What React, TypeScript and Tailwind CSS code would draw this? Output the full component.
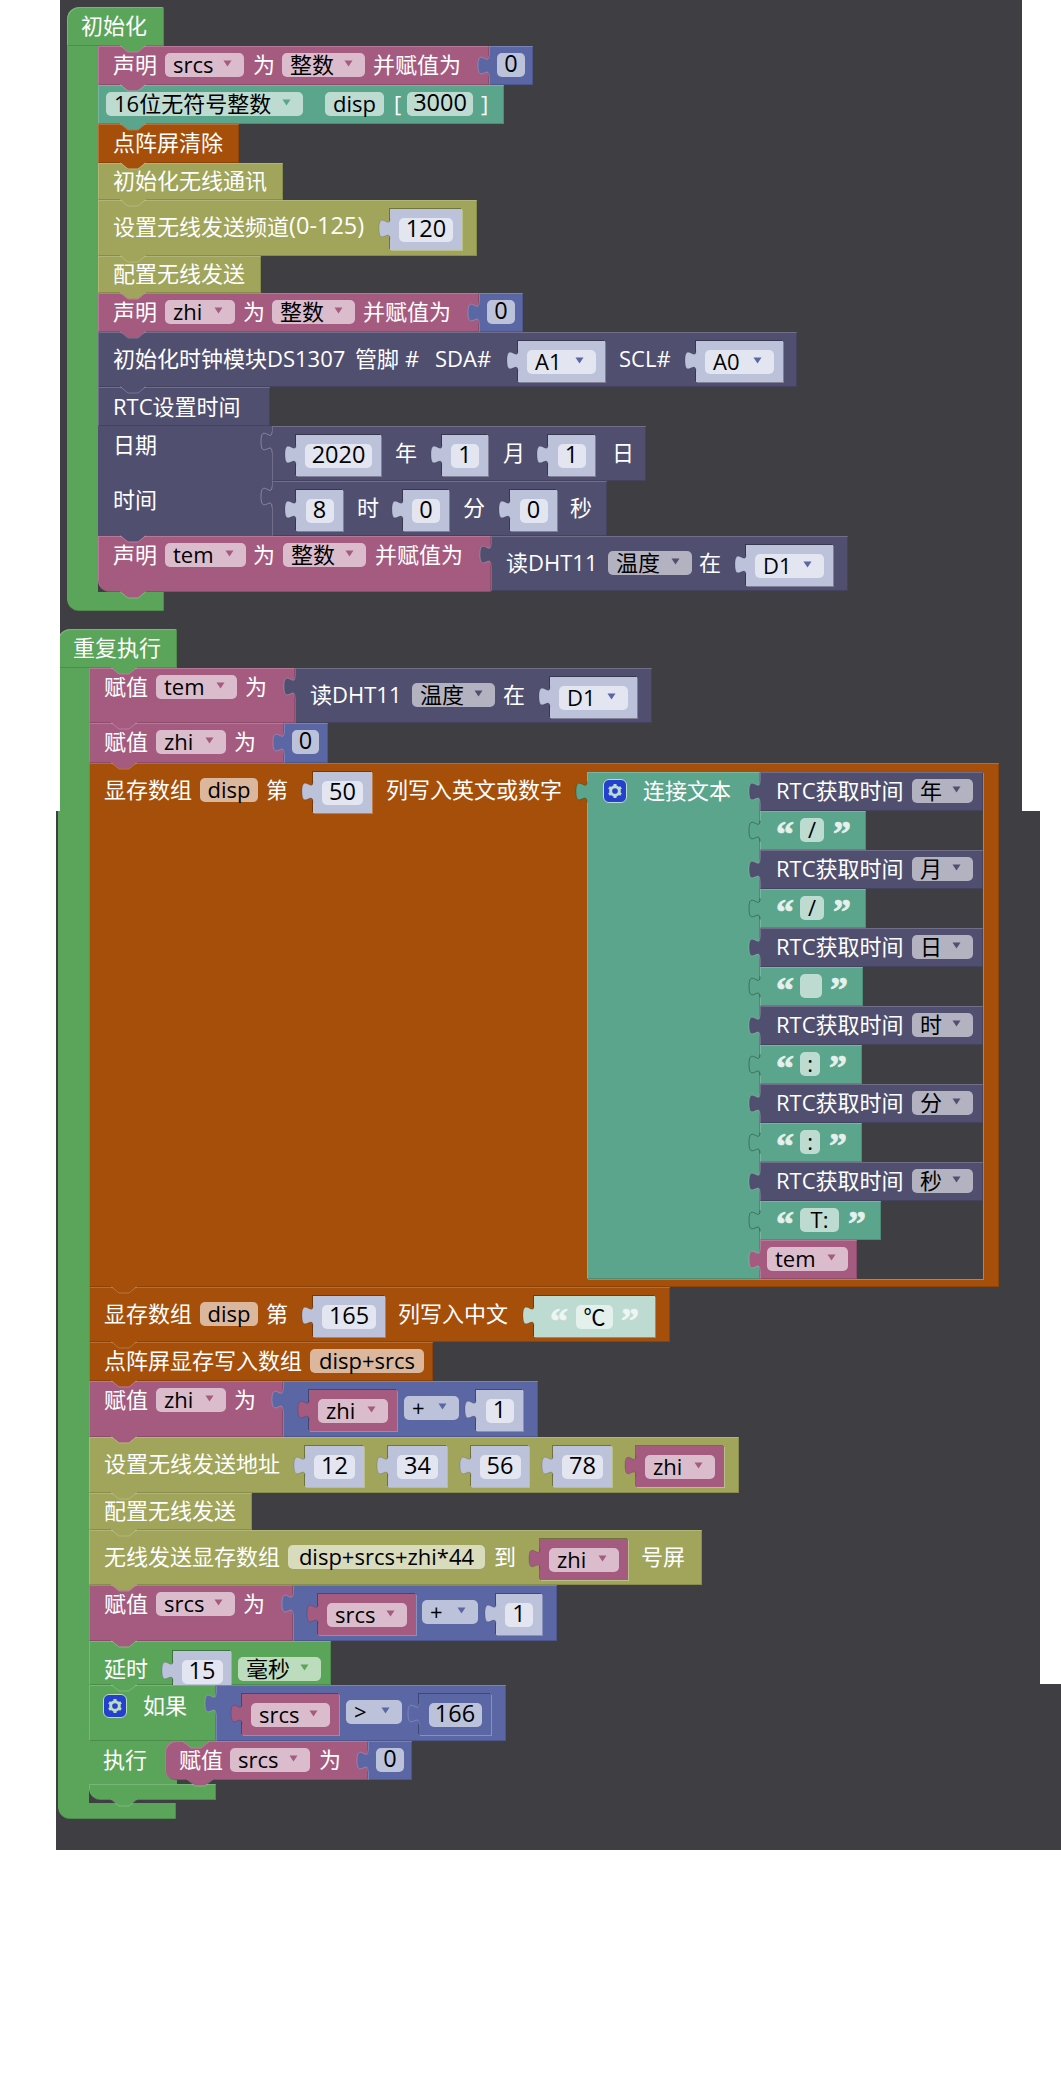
import React from "react";

const P = "#a55b80", B = "#5b67a5", T_ = "#5ba58c", O = "#a64f0a", L = "#a0a55b", D = "#514f70", G = "#5ba55b", SHC = "#bdc2db";
const PINK = "bg-[#a55b80]", BLUE = "bg-[#5b67a5]", TEAL = "bg-[#5ba58c]", ORANGE = "bg-[#a64f0a]", OLIVE = "bg-[#a0a55b]", DARK = "bg-[#514f70]", GREEN = "bg-[#5ba55b]";
const FP = "bg-[#dbbccc]", FT = "bg-[#bddbd1]", FO = "bg-[#dbb89d]", FL = "bg-[#d9dbbd]", FD = "bg-[#b3b2c1]", FG = "bg-[#bddbbd]", FB = "bg-[#bdc2db]", FW = "bg-[#e3e5f0]";

type Kids = { children?: React.ReactNode; c?: string };

function Notch({ fill, c = "left-[22px] -bottom-[7px]" }: { fill: string; c?: string }) {
  return (
    <svg width="26" height="8" viewBox="0 0 26 8" className={`absolute z-10 ${c}`}>
      <path d="M0 0L8 6.5H18L26 0Z" fill={fill} />
      <path d="M0 0.5L8 7H18L26 0.5" fill="none" stroke="rgba(255,255,255,0.22)" strokeWidth="1" />
    </svg>
  );
}

function Tab({ fill, c = "top-[9px]", stroke = "rgba(255,255,255,0.2)" }: { fill: string; c?: string; stroke?: string }) {
  return (
    <svg width="13" height="22" viewBox="0 0 13 22" className={`absolute -left-[12px] z-10 ${c}`}>
      <path d="M12 0.5C12 12 1 -8 1 10.5S12 9 12 21.5H13V0.5Z" fill={fill} />
      <path d="M12 0.5C12 12 1 -8 1 10.5S12 9 12 21.5" fill="none" stroke={stroke} strokeWidth="1" />
    </svg>
  );
}

function Block({ c = "", notch, nc, flat, children }: Kids & { notch?: string; nc?: string; flat?: boolean }) {
  return (
    <div className={`relative flex shrink-0 items-start ${flat ? "" : "shadow-[inset_1px_1px_0_rgba(255,255,255,0.18),inset_-1px_-1px_0_rgba(0,0,0,0.15)]"} ${c}`}>
      {children}
      {notch && <Notch fill={notch} c={nc} />}
    </div>
  );
}

function Line({ children, c = "" }: Kids) {
  return <div className={`relative flex items-start ${c}`}>{children}</div>;
}

function T({ children, c = "" }: Kids) {
  return <span className={`flex h-[24px] shrink-0 -translate-y-[1px] items-center whitespace-nowrap leading-none text-white ${c}`}>{children}</span>;
}

function Arrow({ fill }: { fill: string }) {
  return (
    <svg width="9" height="7" viewBox="0 0 9 7" className="-mt-[3px] shrink-0">
      <path d="M0.5 0.5H8.5L4.5 6.5Z" fill={fill} />
    </svg>
  );
}

function F({ children, c = "", a }: Kids & { a?: string }) {
  const numeric = typeof children === "string" && /^[0-9]+$/.test(children);
  return (
    <div className={`flex h-[24px] shrink-0 items-center whitespace-nowrap rounded-[5px] leading-none text-black ${a ? "justify-between pl-2 pr-3" : "justify-center"} ${c}`}>
      <span className={`-translate-y-[1.5px] ${numeric ? "text-[23.5px]" : ""}`}>{children}</span>
      {a && <Arrow fill={a} />}
    </div>
  );
}

function S({ children, c = "", t = SHC, s = "rgba(0,0,0,0.14)" }: Kids & { t?: string; s?: string }) {
  return (
    <div className={`relative -mt-[6px] flex h-[41px] shrink-0 items-center justify-center shadow-[1px_1px_0_rgba(255,255,255,0.28),-1px_-1px_0_rgba(0,0,0,0.3)] ${c}`}>
      <Tab fill={t} stroke={s} c="top-[9px]" />
      {children}
    </div>
  );
}

function Gear({ c }: { c: string }) {
  return (
    <div className={`flex h-[24px] w-[24px] shrink-0 items-center justify-center rounded-[6px] border bg-[#2340cf] ${c}`}>
      <svg width="16" height="16" viewBox="0 0 24 24" fill="none" stroke="currentColor">
        <circle cx="12" cy="12" r="6.5" strokeWidth="4.5" />
        <g strokeWidth="4.5">
          <path d="M12 1.5V5" />
          <path d="M21.1 6.7L18 8.5" />
          <path d="M21.1 17.3L18 15.5" />
          <path d="M12 22.5V19" />
          <path d="M2.9 17.3L6 15.5" />
          <path d="M2.9 6.7L6 8.5" />
        </g>
      </svg>
    </div>
  );
}

function Q({ children, c = "" }: Kids) {
  return (
    <span className={`flex h-[24px] w-[20px] shrink-0 translate-y-[4px] items-center justify-center font-['Liberation_Serif',serif] text-[36px] font-bold leading-none text-[#e4f0ec] [-webkit-text-stroke:0.7px_currentColor] ${c}`}>
      {children}
    </span>
  );
}

function RtcRow({ label }: { label: string }) {
  return (
    <Block c={`h-[39px] w-[223px] pl-[16px] pt-[7px] ${DARK}`}>
      <Tab fill={D} c="top-[9px]" />
      <T c="w-[128px]">RTC获取时间</T>
      <F c={`ml-2 w-[61px] ${FD}`} a={D}>{label}</F>
    </Block>
  );
}

function TextRow({ c, f, r, text }: { c: string; f: string; r: string; text?: string }) {
  return (
    <Block c={`h-[39px] pl-[15px] pt-[7px] ${TEAL} ${c}`}>
      <Tab fill={T_} c="top-[9px]" stroke="rgba(0,0,0,0.3)" />
      <Q>“</Q>
      <F c={`ml-[5px] ${FT} ${f}`}>{text}</F>
      <Q c={r}>”</Q>
    </Block>
  );
}

function Hat({ title, c, wide, notchC, footC, children }: Kids & { title: string; wide: string; notchC: string; footC: string }) {
  return (
    <div className={`absolute flex flex-col items-start ${c}`}>
      <Block c={`h-[39px] rounded-tl-[12px] rounded-tr-[2px] pt-[7px] ${GREEN} ${wide}`} notch={G} nc={notchC}>
        <T>{title}</T>
      </Block>
      {children}
      <div className={`rounded-bl-[12px] shadow-[inset_0_-1px_0_rgba(0,0,0,0.15),inset_-1px_0_0_rgba(0,0,0,0.15)] ${GREEN} ${footC}`} />
    </div>
  );
}

export default function App() {
  return (
    <div className="relative h-[2100px] w-[1061px] overflow-hidden bg-white font-['Open_Sans','Noto_Sans_CJK_SC',sans-serif] text-[22px]">
      <div className="ml-[60px] h-[811px] w-[962px] bg-[#3f3e43]" />
      <div className="ml-[56px] h-[873px] w-[984px] bg-[#3f3e43]" />
      <div className="ml-[56px] h-[166px] w-[1005px] bg-[#3f3e43]" />

      <Hat title="初始化" c="left-[67px] top-[7px]" wide="w-[97px] pl-[14px]" notchC="left-[53px] -bottom-[7px]" footC="h-[19px] w-[97px]">
        <div className="flex items-stretch">
          <div className={`w-[31px] ${GREEN}`} />
          <div className="flex flex-col">
            <Line>
              <Block c={`h-[39px] w-[391px] pl-[15px] pt-[7px] ${PINK}`} notch={P}>
                <T>声明</T>
                <F c={`ml-2 w-[79px] ${FP}`} a={P}>srcs</F>
                <T c="ml-[9px]">为</T>
                <F c={`ml-[7px] w-[83px] ${FP}`} a={P}>整数</F>
                <T c="ml-2">并赋值为</T>
              </Block>
              <Block c={`h-[39px] w-[44px] pl-2 pt-[7px] ${BLUE}`}>
                <Tab fill={B} />
                <F c={`w-[28px] ${FB}`}>0</F>
              </Block>
            </Line>
            <Block c={`h-[39px] w-[406px] pl-2 pt-[7px] ${TEAL}`} notch={T_}>
              <F c={`w-[197px] ${FT}`} a={T_}>16位无符号整数</F>
              <F c={`ml-[22px] w-[59px] ${FT}`}>disp</F>
              <T c="ml-[10px] w-[13px]">[</T>
              <F c={`w-[66px] ${FT}`}>3000</F>
              <T c="ml-2">]</T>
            </Block>
            <Block c={`h-[39px] w-[141px] pl-[15px] pt-[7px] ${ORANGE}`} notch={O}>
              <T>点阵屏清除</T>
            </Block>
            <Block c={`h-[37px] w-[185px] pl-[15px] pt-[6px] ${OLIVE}`} notch={L}>
              <T>初始化无线通讯</T>
            </Block>
            <Block c={`h-[56px] w-[379px] pl-[15px] pt-[15px] ${OLIVE}`} notch={L}>
              <T c="w-[251px]">设置无线发送频道<span className="text-[23.5px]">(0-125)</span></T>
              <S c={`ml-[26px] w-[72px] ${FB}`}><F c={`w-[54px] ${FW}`}>120</F></S>
            </Block>
            <Block c={`h-[37px] w-[163px] pl-[15px] pt-[6px] ${OLIVE}`} notch={L}>
              <T>配置无线发送</T>
            </Block>
            <Line>
              <Block c={`h-[39px] w-[381px] pl-[15px] pt-[7px] ${PINK}`} notch={P}>
                <T>声明</T>
                <F c={`ml-2 w-[70px] ${FP}`} a={P}>zhi</F>
                <T c="ml-2">为</T>
                <F c={`ml-[7px] w-[83px] ${FP}`} a={P}>整数</F>
                <T c="ml-2">并赋值为</T>
              </Block>
              <Block c={`h-[39px] w-[44px] pl-2 pt-[7px] ${BLUE}`}>
                <Tab fill={B} />
                <F c={`w-[28px] ${FB}`}>0</F>
              </Block>
            </Line>
            <Block c={`h-[55px] w-[699px] pl-[15px] pt-[15px] ${DARK}`} notch={D}>
              <T c="w-[234px]">初始化时钟模块DS1307</T>
              <T c="ml-2">管脚</T>
              <T c="ml-[6px] w-[14px]">#</T>
              <T c="ml-[16px] w-[58px]">SDA#</T>
              <S c={`ml-[25px] w-[87px] ${FB}`}><F c={`w-[69px] ${FW}`} a={B}>A1</F></S>
              <T c="ml-[14px] w-[52px]">SCL#</T>
              <S c={`ml-[25px] w-[87px] ${FB}`}><F c={`w-[69px] ${FW}`} a={B}>A0</F></S>
            </Block>
            <Block c={`h-[39px] w-[172px] pl-[15px] pt-[8px] ${DARK}`}>
              <T>RTC设置时间</T>
            </Block>
            <Line>
              <Block flat c={`h-[55px] w-[174px] pl-[15px] pt-[7px] ${DARK}`}>
                <T>日期</T>
              </Block>
              <Block c={`h-[55px] w-[374px] pl-[24px] pt-[15px] ${DARK}`}>
                <Tab fill={D} stroke="rgba(255,255,255,0.3)" c="top-[5px]" />
                <S c={`w-[85px] ${FB}`}><F c={`w-[67px] ${FW}`}>2020</F></S>
                <T c="ml-[14px]">年</T>
                <S c={`ml-[25px] w-[46px] ${FB}`}><F c={`w-[28px] ${FW}`}>1</F></S>
                <T c="ml-[15px]">月</T>
                <S c={`ml-[23px] w-[47px] ${FB}`}><F c={`w-[28px] ${FW}`}>1</F></S>
                <T c="ml-[17px]">日</T>
              </Block>
            </Line>
            <Line>
              <Block flat c={`h-[55px] w-[174px] pl-[15px] pt-[7px] ${DARK}`}>
                <T>时间</T>
              </Block>
              <Block c={`h-[55px] w-[335px] pl-[24px] pt-[15px] ${DARK}`}>
                <Tab fill={D} stroke="rgba(255,255,255,0.3)" c="top-[5px]" />
                <S c={`w-[47px] ${FB}`}><F c={`w-[28px] ${FW}`}>8</F></S>
                <T c="ml-[14px]">时</T>
                <S c={`ml-[24px] w-[46px] ${FB}`}><F c={`w-[28px] ${FW}`}>0</F></S>
                <T c="ml-[14px]">分</T>
                <S c={`ml-[25px] w-[47px] ${FB}`}><F c={`w-[28px] ${FW}`}>0</F></S>
                <T c="ml-[13px]">秒</T>
              </Block>
              <Notch fill={D} />
            </Line>
            <Line>
              <Block c={`h-[56px] w-[393px] rounded-bl-[12px] pl-[15px] pt-[7px] ${PINK}`} notch={P}>
                <T>声明</T>
                <F c={`ml-2 w-[81px] ${FP}`} a={P}>tem</F>
                <T c="ml-[7px]">为</T>
                <F c={`ml-2 w-[83px] ${FP}`} a={P}>整数</F>
                <T c="ml-[9px]">并赋值为</T>
              </Block>
              <Block c={`h-[55px] w-[357px] pl-[15px] pt-[15px] ${DARK}`}>
                <Tab fill={D} c="top-[8px]" />
                <T c="w-[102px]">读DHT11</T>
                <F c={`w-[84px] ${FD}`} a={D}>温度</F>
                <T c="ml-[7px]">在</T>
                <S c={`ml-[25px] w-[87px] ${FB}`}><F c={`w-[69px] ${FW}`} a={B}>D1</F></S>
              </Block>
            </Line>
          </div>
        </div>
      </Hat>

      <Hat title="重复执行" c="left-[58px] top-[629px]" wide="w-[119px] pl-[15px]" notchC="left-[53px] -bottom-[7px]" footC="h-[16px] w-[118px]">
        <div className="flex items-stretch">
          <div className={`w-[31px] ${GREEN}`} />
          <div className="flex flex-col pb-[3px]">
            <Line>
              <Block c={`h-[55px] w-[206px] pl-[15px] pt-[7px] ${PINK}`} notch={P}>
                <T>赋值</T>
                <F c={`ml-2 w-[81px] ${FP}`} a={P}>tem</F>
                <T c="ml-2">为</T>
              </Block>
              <Block c={`h-[55px] w-[357px] pl-[15px] pt-[15px] ${DARK}`}>
                <Tab fill={D} c="top-[8px]" />
                <T c="w-[102px]">读DHT11</T>
                <F c={`w-[83px] ${FD}`} a={D}>温度</F>
                <T c="ml-2">在</T>
                <S c={`ml-[25px] w-[87px] ${FB}`}><F c={`w-[69px] ${FW}`} a={B}>D1</F></S>
              </Block>
            </Line>
            <Line>
              <Block c={`h-[40px] w-[195px] pl-[15px] pt-[7px] ${PINK}`} notch={P}>
                <T>赋值</T>
                <F c={`ml-2 w-[70px] ${FP}`} a={P}>zhi</F>
                <T c="ml-2">为</T>
              </Block>
              <Block c={`h-[40px] w-[44px] pl-2 pt-[7px] ${BLUE}`}>
                <Tab fill={B} />
                <F c={`w-[27px] ${FB}`}>0</F>
              </Block>
            </Line>
            <Block c={`h-[524px] w-[910px] pl-[15px] pt-[15px] ${ORANGE}`} notch={O}>
              <T>显存数组</T>
              <F c={`ml-2 w-[58px] ${FO}`}>disp</F>
              <T c="ml-2">第</T>
              <S c={`ml-[25px] w-[59px] ${FB}`}><F c={`w-[41px] ${FW}`}>50</F></S>
              <T c="ml-[14px] w-[177px]">列写入英文或数字</T>
              <div className="relative ml-[24px] -mt-[6px] flex h-[507px] w-[396px] bg-[#3f3e43] shadow-[1px_1px_0_rgba(255,255,255,0.28)]">
                <Block c={`h-[507px] w-[173px] pl-[16px] pt-[7px] ${TEAL}`}>
                  <Tab fill={T_} stroke="rgba(0,0,0,0.2)" c="top-[9px]" />
                  <Gear c="border-[#bddbd1] text-[#bddbd1]" />
                  <T c="ml-[16px]">连接文本</T>
                </Block>
                <div className="flex flex-col">
                  <RtcRow label="年" />
                  <TextRow c="w-[106px]" f="w-[24px]" r="ml-[8px]" text="/" />
                  <RtcRow label="月" />
                  <TextRow c="w-[106px]" f="w-[24px]" r="ml-[8px]" text="/" />
                  <RtcRow label="日" />
                  <TextRow c="w-[103px]" f="w-[22px]" r="ml-[7px]" />
                  <RtcRow label="时" />
                  <TextRow c="w-[102px]" f="w-[20px]" r="ml-[8px]" text=":" />
                  <RtcRow label="分" />
                  <TextRow c="w-[102px]" f="w-[20px]" r="ml-[8px]" text=":" />
                  <RtcRow label="秒" />
                  <TextRow c="w-[121px]" f="w-[39px]" r="ml-[8px]" text="T:" />
                  <Block c={`h-[39px] w-[97px] pl-[7px] pt-[7px] ${PINK}`}>
                    <Tab fill={P} />
                    <F c={`w-[81px] ${FP}`} a={P}>tem</F>
                  </Block>
                </div>
              </div>
            </Block>
            <Block c={`h-[55px] w-[581px] pl-[15px] pt-[15px] ${ORANGE}`} notch={O}>
              <T>显存数组</T>
              <F c={`ml-2 w-[58px] ${FO}`}>disp</F>
              <T c="ml-2">第</T>
              <S c={`ml-[25px] w-[72px] ${FB}`}><F c={`w-[54px] ${FW}`}>165</F></S>
              <T c="ml-[13px]">列写入中文</T>
              <S c={`ml-[26px] w-[121px] ${FT}`} t="#bddbd1">
                <Q c="w-[18px] text-[#eef6f3]">“</Q>
                <F c="mx-[7px] w-[37px] bg-[#e3f0ec]">℃</F>
                <Q c="w-[18px] text-[#eef6f3]">”</Q>
              </S>
            </Block>
            <Block c={`h-[39px] w-[344px] pl-[15px] pt-[7px] ${ORANGE}`} notch={O}>
              <T c="w-[198px]">点阵屏显存写入数组</T>
              <F c={`ml-2 w-[114px] ${FO}`}>disp+srcs</F>
            </Block>
            <Line>
              <Block c={`h-[56px] w-[194px] pl-[15px] pt-[7px] ${PINK}`} notch={P}>
                <T>赋值</T>
                <F c={`ml-2 w-[70px] ${FP}`} a={P}>zhi</F>
                <T c="ml-2">为</T>
              </Block>
              <Block c={`h-[56px] w-[255px] pl-[26px] pt-[15px] ${BLUE}`}>
                <Tab fill={B} c="top-[8px]" />
                <S c={`w-[88px] ${PINK}`} t={P}><F c={`w-[70px] ${FP}`} a={P}>zhi</F></S>
                <F c={`ml-[7px] w-[55px] ${FB}`} a={B}>+</F>
                <S c={`ml-[17px] w-[47px] ${FB}`}><F c={`w-[28px] ${FW}`}>1</F></S>
              </Block>
            </Line>
            <Block c={`h-[56px] w-[650px] pl-[15px] pt-[15px] ${OLIVE}`} notch={L}>
              <T>设置无线发送地址</T>
              <S c={`ml-[25px] w-[59px] ${FB}`}><F c={`w-[41px] ${FW}`}>12</F></S>
              <S c={`ml-[24px] w-[59px] ${FB}`}><F c={`w-[41px] ${FW}`}>34</F></S>
              <S c={`ml-[24px] w-[58px] ${FB}`}><F c={`w-[41px] ${FW}`}>56</F></S>
              <S c={`ml-[24px] w-[59px] ${FB}`}><F c={`w-[41px] ${FW}`}>78</F></S>
              <S c={`ml-[24px] w-[88px] ${PINK}`} t={P}><F c={`w-[70px] ${FP}`} a={P}>zhi</F></S>
            </Block>
            <Block c={`h-[37px] w-[163px] pl-[15px] pt-[6px] ${OLIVE}`} notch={L}>
              <T>配置无线发送</T>
            </Block>
            <Block c={`h-[55px] w-[613px] pl-[15px] pt-[15px] ${OLIVE}`} notch={L}>
              <T>无线发送显存数组</T>
              <F c={`ml-2 w-[197px] ${FL}`}>disp+srcs+zhi*44</F>
              <T c="ml-[9px]">到</T>
              <S c={`ml-[24px] w-[88px] ${PINK}`} t={P}><F c={`w-[70px] ${FP}`} a={P}>zhi</F></S>
              <T c="ml-[13px]">号屏</T>
            </Block>
            <Line>
              <Block c={`h-[56px] w-[204px] pl-[15px] pt-[7px] ${PINK}`} notch={P}>
                <T>赋值</T>
                <F c={`ml-2 w-[79px] ${FP}`} a={P}>srcs</F>
                <T c="ml-2">为</T>
              </Block>
              <Block c={`h-[56px] w-[264px] pl-[25px] pt-[15px] ${BLUE}`}>
                <Tab fill={B} c="top-[8px]" />
                <S c={`w-[98px] ${PINK}`} t={P}><F c={`w-[80px] ${FP}`} a={P}>srcs</F></S>
                <F c={`ml-[6px] w-[56px] ${FB}`} a={B}>+</F>
                <S c={`ml-[18px] w-[46px] ${FB}`}><F c={`w-[28px] ${FW}`}>1</F></S>
              </Block>
            </Line>
            <Block c={`h-[44px] w-[242px] pl-[15px] pt-[16px] ${GREEN}`} notch={G}>
              <T>延时</T>
              <S c={`ml-[25px] w-[58px] ${FB}`}><F c={`w-[41px] ${FW}`}>15</F></S>
              <F c={`ml-[7px] w-[83px] ${FG}`} a={G}>毫秒</F>
            </Block>
            <Line>
              <Block c={`h-[56px] w-[127px] pl-[14px] pt-[9px] ${GREEN}`}>
                <Gear c="border-[#bddbbd] text-[#bddbbd]" />
                <T c="ml-[16px]">如果</T>
              </Block>
              <Block c={`h-[56px] w-[290px] pl-[26px] pt-[15px] ${BLUE}`}>
                <Tab fill={B} c="top-[8px]" />
                <S c={`w-[97px] ${PINK}`} t={P}><F c={`w-[79px] ${FP}`} a={P}>srcs</F></S>
                <F c={`ml-[7px] w-[56px] ${FB}`} a={B}>&gt;</F>
                <S c={`ml-[17px] w-[72px] ${BLUE}`} t={B} s="rgba(255,255,255,0.2)"><F c={`w-[53px] ${FB}`}>166</F></S>
              </Block>
            </Line>
            <Line>
              <Block flat c={`h-[43px] w-[88px] pl-[14px] pt-[7px] ${GREEN}`}>
                <T>执行</T>
              </Block>
              <Block c={`-ml-[12px] h-[39px] w-[203px] rounded-l-[11px] pl-[14px] pt-[7px] ${PINK}`} notch={P}>
                <Notch fill={G} c="left-[18px] top-0" />
                <T>赋值</T>
                <F c={`ml-[7px] w-[80px] ${FP}`} a={P}>srcs</F>
                <T c="ml-[9px]">为</T>
              </Block>
              <Block c={`h-[39px] w-[44px] pl-2 pt-[7px] ${BLUE}`}>
                <Tab fill={B} />
                <F c={`w-[28px] ${FB}`}>0</F>
              </Block>
            </Line>
            <Block c={`h-[16px] w-[127px] rounded-bl-[12px] ${GREEN}`} notch={G} />
          </div>
        </div>
      </Hat>

      <div className="absolute left-0 top-0 z-20 h-[811px] w-[60px] bg-white" />
    </div>
  );
}
